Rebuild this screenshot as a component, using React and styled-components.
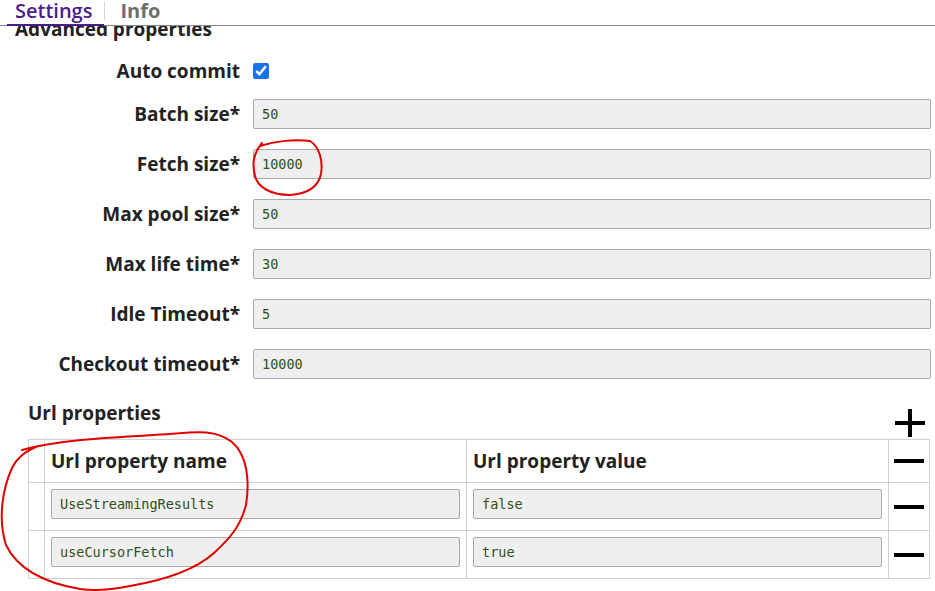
import React from "react";
import styled, { createGlobalStyle } from "styled-components";

const GlobalStyle = createGlobalStyle`
  html, body {
    margin: 0;
    padding: 0;
    background: #fff;
  }
  body {
    font-family: "Open Sans", "Noto Sans", sans-serif;
    color: #222;
  }
`;

const fields = [
  { label: "Batch size*", value: "50" },
  { label: "Fetch size*", value: "10000" },
  { label: "Max pool size*", value: "50" },
  { label: "Max life time*", value: "30" },
  { label: "Idle Timeout*", value: "5" },
  { label: "Checkout timeout*", value: "10000" },
];

const urlProps = [
  { name: "UseStreamingResults", value: "false" },
  { name: "useCursorFetch", value: "true" },
];

const PlusIcon = () => (
  <svg width="32" height="28" viewBox="0 0 32 28">
    <path d="M1 14H31M16 0V28" stroke="#000" strokeWidth="4" fill="none" />
  </svg>
);

const MinusIcon = () => (
  <svg width="32" height="6" viewBox="0 0 32 6">
    <path d="M1 3H31" stroke="#000" strokeWidth="4" fill="none" />
  </svg>
);

const App = () => {
  return (
    <Page>
      <GlobalStyle />
      <TabBar>
        <Tab $active>Settings</Tab>
        <TabSep />
        <Tab>Info</Tab>
      </TabBar>
      <Scroll>
        <SectionTitle>Advanced properties</SectionTitle>
        <Form>
          <Label>Auto commit</Label>
          <CheckWrap>
            <Check type="checkbox" defaultChecked />
          </CheckWrap>
          {fields.map((f) => (
            <React.Fragment key={f.label}>
              <Label>{f.label}</Label>
              <Input defaultValue={f.value} />
            </React.Fragment>
          ))}
        </Form>
        <UrlHead>
          <h3>Url properties</h3>
          <IconButton>
            <PlusIcon />
          </IconButton>
        </UrlHead>
        <Table>
          <colgroup>
            <col style={{ width: 16 }} />
            <col />
            <col />
            <col style={{ width: 41 }} />
          </colgroup>
          <thead>
            <tr>
              <th />
              <th>Url property name</th>
              <th>Url property value</th>
              <th className="action">
                <MinusIcon />
              </th>
            </tr>
          </thead>
          <tbody>
            {urlProps.map((p) => (
              <tr key={p.name}>
                <td />
                <td>
                  <Input defaultValue={p.name} />
                </td>
                <td>
                  <Input defaultValue={p.value} />
                </td>
                <td className="action">
                  <MinusIcon />
                </td>
              </tr>
            ))}
          </tbody>
        </Table>
      </Scroll>
      <Annotation width="935" height="591" viewBox="0 0 935 591">
        <path d="M260 146 C275 141 295 139 310 141 C320 147 323 162 321 174 C318 188 305 194 290 195 C272 195 258 188 255 176 C252 164 253 154 262 143" />
        <path d="M22 450 C60 439 120 437 170 434 C195 432 215 429 232 442 C247 455 250 480 246 505 C240 528 228 540 214 553 C195 570 165 580 130 586 C110 590 95 591 80 589 C45 583 18 570 6 545 C-2 520 2 490 12 468 C17 458 24 452 38 446" />
      </Annotation>
    </Page>
  );
};

export default App;

const Page = styled.div`
  position: relative;
  width: 935px;
  height: 591px;
  overflow: hidden;
`;

const TabBar = styled.div`
  position: relative;
  z-index: 2;
  display: flex;
  align-items: flex-start;
  height: 26px;
  padding-left: 7px;
  background: #fff;
  border-bottom: 1px solid #8a8a8a;
  box-sizing: border-box;
`;

const Tab = styled.div`
  height: 26px;
  box-sizing: border-box;
  padding: 0 12px 0 ${(p) => (p.$active ? "8px" : "15px")};
  font-size: 20px;
  line-height: 22px;
  font-weight: ${(p) => (p.$active ? 600 : 700)};
  color: ${(p) => (p.$active ? "#4b1d8a" : "#6e6e6e")};
  border-bottom: ${(p) => (p.$active ? "2px solid #4b1d8a" : "none")};
  margin-bottom: -1px;
`;

const TabSep = styled.div`
  width: 1px;
  height: 18px;
  margin-top: 2px;
  background: #d4d4d4;
`;

const Scroll = styled.div`
  position: relative;
  z-index: 1;
`;

const SectionTitle = styled.h2`
  margin: -9px 0 0 15px;
  font-size: 19px;
  line-height: 24px;
  font-weight: 700;
  color: #222;
`;

const Form = styled.div`
  display: grid;
  grid-template-columns: 240px 1fr;
  column-gap: 13px;
  row-gap: 20px;
  align-items: center;
  padding: 22px 4px 0 0;
`;

const Label = styled.label`
  text-align: right;
  font-size: 19px;
  font-weight: 700;
  color: #222;
  line-height: 16px;
`;

const CheckWrap = styled.div`
  height: 16px;
  display: flex;
  align-items: center;
`;

const Check = styled.input`
  margin: 0;
  width: 16px;
  height: 16px;
  accent-color: #1a73e8;
`;

const Input = styled.input`
  box-sizing: border-box;
  width: 100%;
  height: 30px;
  padding: 0 8px;
  background: #efefef;
  border: 1px solid #a9a9a9;
  border-radius: 2px;
  font-family: "DejaVu Sans Mono", monospace;
  font-size: 13.5px;
  color: #2f5020;
  outline: none;
`;

const UrlHead = styled.div`
  display: flex;
  align-items: flex-start;
  justify-content: space-between;
  padding: 0 9px 0 28px;
  margin-top: 30px;
  height: 30px;

  h3 {
    margin: -8px 0 0;
    font-size: 19px;
    line-height: 24px;
    font-weight: 700;
    color: #222;
  }
`;

const IconButton = styled.div`
  display: flex;
  align-items: center;
  justify-content: center;
  width: 32px;
  height: 28px;
`;

const Table = styled.table`
  margin: 0 5px 0 28px;
  width: 902px;
  border-collapse: collapse;
  table-layout: fixed;

  th,
  td {
    border: 1px solid #d0d0d0;
    padding: 6px 6px 11px;
    vertical-align: top;
  }
  th {
    height: 41px;
    box-sizing: border-box;
    padding: 8px 6px;
    text-align: left;
    font-size: 19px;
    font-weight: 700;
    color: #222;
    vertical-align: middle;
  }
  .action {
    padding: 0;
    text-align: center;
    vertical-align: middle;
  }
  .action svg {
    display: block;
    margin: 0 auto;
  }
`;

const Annotation = styled.svg`
  position: absolute;
  left: 0;
  top: 0;
  z-index: 3;
  pointer-events: none;

  path {
    fill: none;
    stroke: #e00000;
    stroke-width: 2;
    stroke-linecap: round;
  }
`;
